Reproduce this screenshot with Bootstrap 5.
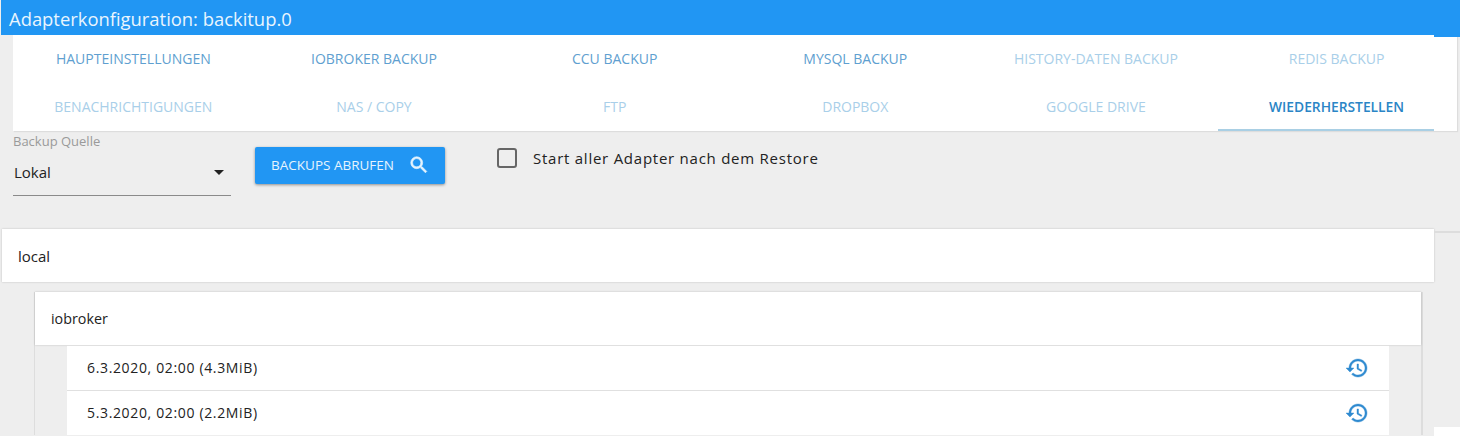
<!DOCTYPE html>
<html lang="de">
<head>
  <meta charset="UTF-8" />
  <meta name="viewport" content="width=device-width, initial-scale=1.0"/>
  <title>Adapterkonfiguration: backitup.0</title>
  <link href="https://cdn.jsdelivr.net/npm/bootstrap@5.3.3/dist/css/bootstrap.min.css" rel="stylesheet">
  <style>
    html, body { height: 436px; overflow: hidden; }
    body { background: #eee; font-family: "Open Sans", "Liberation Sans", sans-serif; color: #222; position: relative; }
    .kopf { height: 35px; margin-left: 1px; background: #2196f3; color: #e9f5fe; font-size: 18.4px; line-height: 38px; padding-left: 8px; }
    .kopf-rest { position: absolute; left: 1434px; top: 1px; width: 26px; height: 36px; background: #2196f3; }
    .reiter { margin: 0 3px 0 13px; background: #fff; height: 96px; --bs-gutter-x: 0; box-shadow: 1px 1px 1px #ddd; }
    .reiter a { display: block; height: 48px; line-height: 48px; text-align: center; font-size: 14px; font-weight: 500; text-decoration: none; color: #a9cfe9; }
    .reiter a.erreichbar { color: #5f9fd0; }
    .reiter a.aktiv { color: #2a85c6; font-size: 13.8px; font-weight: 600; }
    .strich { position: absolute; left: 1218px; top: 129px; width: 216px; height: 2px; background: #a9cfe4; }
    .filter { height: 98px; }
    .quelle { width: 218px; margin-left: 13px; }
    .quelle label { display: block; font-size: 13px; color: #9a9a9a; line-height: 20px; }
    .auswahl { height: 45px; border-bottom: 1px solid #8a8a8a; font-size: 15px; padding: 0 0 2px 1px; color: #222; }
    .pfeil { width: 0; height: 0; border: 5px solid transparent; border-top-color: #222; border-bottom-width: 0; margin-right: 7px; }
    .btn-abrufen { margin: 16px 0 0 24px; width: 190px; height: 37px; padding: 0 0 0 1px; background: #2196f3; border: 0; border-radius: 2px; color: #e6f4fe; font-size: 13.5px; font-weight: 500; box-shadow: 0 1px 3px rgba(0,0,0,.4); }
    .btn-abrufen svg { margin-left: 14px; margin-top: -2px; }
    .neustart { margin: 16px 0 0 52px; font-size: 15px; letter-spacing: .75px; line-height: 22px; }
    .kasten { width: 20px; height: 20px; border: 2px solid #666; border-radius: 3px; margin-right: 16px; }
    .ebene { margin: 0 26px 0 2px; }
    .kopfzeile { height: 53px; line-height: 54px; background: #fff; padding-left: 16px; font-size: 15px; box-shadow: 0 0 2px rgba(0,0,0,.2); }
    .kopfzeile.innen { font-size: 14.3px; }
    .ebene-zwei { margin: 10px 11px 0 32px; border-right: 2px solid #ddd; border-left: 1px solid #ddd; }
    .eintrag { margin: 0 32px; height: 45px; background: #fff; border-top: 1px solid #e0e0e0; padding: 0 20px; font-size: 14px; letter-spacing: .65px; }
    .eintrag span { padding-bottom: 2px; }
    .linie-rechts { position: absolute; left: 1434px; top: 231px; width: 26px; height: 2px; background: #ddd; }
    .rest-weiss { position: absolute; left: 1434px; top: 427px; width: 26px; height: 9px; background: #fff; }
  </style>
</head>
<body>
  <div class="kopf">Adapterkonfiguration: backitup.0</div>
  <div class="kopf-rest"></div>

  <!-- Reiter -->
  <div class="row reiter">
    <div class="col-2"><a href="#" class="erreichbar">HAUPTEINSTELLUNGEN</a></div>
    <div class="col-2"><a href="#" class="erreichbar">IOBROKER BACKUP</a></div>
    <div class="col-2"><a href="#" class="erreichbar">CCU BACKUP</a></div>
    <div class="col-2"><a href="#" class="erreichbar">MYSQL BACKUP</a></div>
    <div class="col-2"><a href="#">HISTORY-DATEN BACKUP</a></div>
    <div class="col-2"><a href="#">REDIS BACKUP</a></div>
    <div class="col-2"><a href="#">BENACHRICHTIGUNGEN</a></div>
    <div class="col-2"><a href="#">NAS / COPY</a></div>
    <div class="col-2"><a href="#">FTP</a></div>
    <div class="col-2"><a href="#">DROPBOX</a></div>
    <div class="col-2"><a href="#">GOOGLE DRIVE</a></div>
    <div class="col-2"><a href="#" class="aktiv">WIEDERHERSTELLEN</a></div>
  </div>
  <div class="strich"></div>

  <!-- Filter -->
  <div class="filter d-flex align-items-start">
    <div class="quelle">
      <label>Backup Quelle</label>
      <div class="auswahl d-flex justify-content-between align-items-center">
        <span>Lokal</span><span class="pfeil"></span>
      </div>
    </div>
    <button class="btn btn-abrufen d-flex align-items-center justify-content-center" type="button">
      BACKUPS ABRUFEN
      <svg width="22" height="22" viewBox="0 0 24 24" fill="#e6f4fe" stroke="#e6f4fe" stroke-width=".7"><path d="M15.5 14h-.79l-.28-.27A6.471 6.471 0 0 0 16 9.5 6.5 6.5 0 1 0 9.5 16c1.61 0 3.09-.59 4.23-1.57l.27.28v.79l5 4.99L20.49 19l-4.99-5zm-6 0C7.01 14 5 11.99 5 9.5S7.01 5 9.5 5 14 7.01 14 9.5 11.99 14 9.5 14z"/></svg>
    </button>
    <div class="neustart d-flex align-items-center">
      <span class="kasten"></span>
      <span>Start aller Adapter nach dem Restore</span>
    </div>
  </div>

  <!-- Backups -->
  <div class="ebene">
    <div class="kopfzeile">local</div>
    <div class="ebene-zwei">
      <div class="kopfzeile innen">iobroker</div>
      <div class="eintrag d-flex justify-content-between align-items-center">
        <span>6.3.2020, 02:00 (4.3MiB)</span>
        <svg width="24" height="24" viewBox="0 0 24 24" fill="#2f8ad0" stroke="#2f8ad0" stroke-width=".4"><path d="M13 3c-4.97 0-9 4.03-9 9H1l3.89 3.89.07.14L9 12H6c0-3.87 3.13-7 7-7s7 3.13 7 7-3.13 7-7 7c-1.93 0-3.68-.79-4.94-2.06l-1.42 1.42C8.27 19.99 10.51 21 13 21c4.97 0 9-4.03 9-9s-4.03-9-9-9zm-1 5v5l4.28 2.54.72-1.21-3.5-2.08V8H12z"/></svg>
      </div>
      <div class="eintrag d-flex justify-content-between align-items-center">
        <span>5.3.2020, 02:00 (2.2MiB)</span>
        <svg width="24" height="24" viewBox="0 0 24 24" fill="#2f8ad0" stroke="#2f8ad0" stroke-width=".4"><path d="M13 3c-4.97 0-9 4.03-9 9H1l3.89 3.89.07.14L9 12H6c0-3.87 3.13-7 7-7s7 3.13 7 7-3.13 7-7 7c-1.93 0-3.68-.79-4.94-2.06l-1.42 1.42C8.27 19.99 10.51 21 13 21c4.97 0 9-4.03 9-9s-4.03-9-9-9zm-1 5v5l4.28 2.54.72-1.21-3.5-2.08V8H12z"/></svg>
      </div>
    </div>
  </div>
  <div class="linie-rechts"></div>
  <div class="rest-weiss"></div>

  <script src="https://cdn.jsdelivr.net/npm/bootstrap@5.3.3/dist/js/bootstrap.bundle.min.js"></script>
</body>
</html>
